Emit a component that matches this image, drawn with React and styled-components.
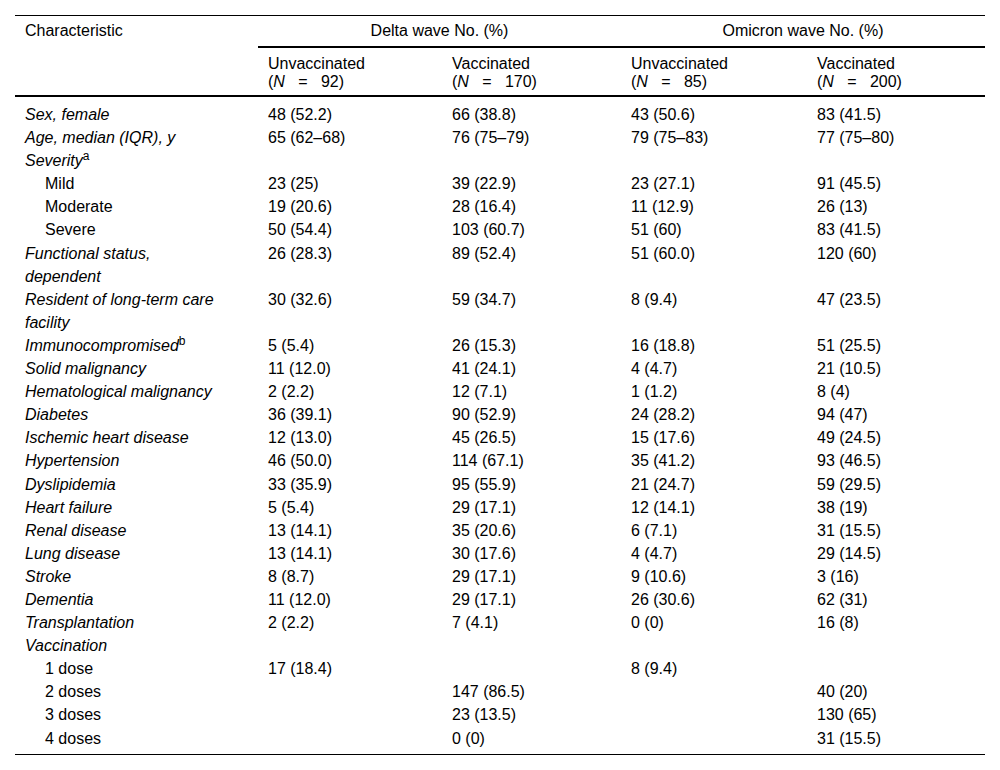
import React from "react";
import styled, { createGlobalStyle, css } from "styled-components";

const GlobalStyle = createGlobalStyle`
  body {
    margin: 0;
    background: #fff;
    color: #000;
    font-family: "Liberation Sans", Arial, sans-serif;
  }
`;

const columns = css`
  display: grid;
  grid-template-columns: 243px 184px 179px 186px 178px;
`;

const TableBox = styled.div`
  margin: 15px 0 0 15px;
  width: 970px;
  border-top: 1px solid #000;
  border-bottom: 1px solid #000;
  font-size: 16px;
  color: #000;
`;

const Head = styled.div`
  ${columns};
  grid-template-rows: auto auto;
  line-height: 18px;
  border-bottom: 2px solid #000;
`;

const Corner = styled.div`
  grid-row: 1 / span 2;
  padding: 6px 10px;
`;

const Group = styled.div`
  grid-column: span 2;
  text-align: center;
  padding: 6px 10px;
  border-bottom: 2px solid #000;
`;

const Sub = styled.div`
  padding: 7px 10px 4px;
`;

const Body = styled.div`
  padding: 6px 0 4px;
`;

const Row = styled.div`
  ${columns};
  line-height: 23.1px;
`;

const Label = styled.div`
  padding: 0 37px 0 ${(p) => (p.$indent ? "30px" : "10px")};
  font-style: ${(p) => (p.$indent ? "normal" : "italic")};
`;

const Value = styled.div`
  padding: 0 10px;
`;

const Sup = styled.sup`
  font-size: 12px;
  font-style: normal;
  line-height: 0;
  vertical-align: 6px;
`;

const Count = ({ n }) => (
  <>
    (<i>N</i>
    {"\u00a0\u00a0\u00a0=\u00a0\u00a0\u00a0"}
    {n})
  </>
);

const groups = [
  { title: "Unvaccinated", n: 92 },
  { title: "Vaccinated", n: 170 },
  { title: "Unvaccinated", n: 85 },
  { title: "Vaccinated", n: 200 },
];

const rows = [
  { label: "Sex, female", v: ["48 (52.2)", "66 (38.8)", "43 (50.6)", "83 (41.5)"] },
  { label: "Age, median (IQR), y", v: ["65 (62–68)", "76 (75–79)", "79 (75–83)", "77 (75–80)"] },
  { label: "Severity", sup: "a", v: ["", "", "", ""] },
  { label: "Mild", indent: true, v: ["23 (25)", "39 (22.9)", "23 (27.1)", "91 (45.5)"] },
  { label: "Moderate", indent: true, v: ["19 (20.6)", "28 (16.4)", "11 (12.9)", "26 (13)"] },
  { label: "Severe", indent: true, v: ["50 (54.4)", "103 (60.7)", "51 (60)", "83 (41.5)"] },
  { label: "Functional status, dependent", v: ["26 (28.3)", "89 (52.4)", "51 (60.0)", "120 (60)"] },
  { label: "Resident of long-term care facility", v: ["30 (32.6)", "59 (34.7)", "8 (9.4)", "47 (23.5)"] },
  { label: "Immunocompromised", sup: "b", v: ["5 (5.4)", "26 (15.3)", "16 (18.8)", "51 (25.5)"] },
  { label: "Solid malignancy", v: ["11 (12.0)", "41 (24.1)", "4 (4.7)", "21 (10.5)"] },
  { label: "Hematological malignancy", v: ["2 (2.2)", "12 (7.1)", "1 (1.2)", "8 (4)"] },
  { label: "Diabetes", v: ["36 (39.1)", "90 (52.9)", "24 (28.2)", "94 (47)"] },
  { label: "Ischemic heart disease", v: ["12 (13.0)", "45 (26.5)", "15 (17.6)", "49 (24.5)"] },
  { label: "Hypertension", v: ["46 (50.0)", "114 (67.1)", "35 (41.2)", "93 (46.5)"] },
  { label: "Dyslipidemia", v: ["33 (35.9)", "95 (55.9)", "21 (24.7)", "59 (29.5)"] },
  { label: "Heart failure", v: ["5 (5.4)", "29 (17.1)", "12 (14.1)", "38 (19)"] },
  { label: "Renal disease", v: ["13 (14.1)", "35 (20.6)", "6 (7.1)", "31 (15.5)"] },
  { label: "Lung disease", v: ["13 (14.1)", "30 (17.6)", "4 (4.7)", "29 (14.5)"] },
  { label: "Stroke", v: ["8 (8.7)", "29 (17.1)", "9 (10.6)", "3 (16)"] },
  { label: "Dementia", v: ["11 (12.0)", "29 (17.1)", "26 (30.6)", "62 (31)"] },
  { label: "Transplantation", v: ["2 (2.2)", "7 (4.1)", "0 (0)", "16 (8)"] },
  { label: "Vaccination", v: ["", "", "", ""] },
  { label: "1 dose", indent: true, v: ["17 (18.4)", "", "8 (9.4)", ""] },
  { label: "2 doses", indent: true, v: ["", "147 (86.5)", "", "40 (20)"] },
  { label: "3 doses", indent: true, v: ["", "23 (13.5)", "", "130 (65)"] },
  { label: "4 doses", indent: true, v: ["", "0 (0)", "", "31 (15.5)"] },
];

export default function App() {
  return (
    <>
      <GlobalStyle />
      <TableBox>
        <Head>
          <Corner>Characteristic</Corner>
          <Group>Delta wave No. (%)</Group>
          <Group>Omicron wave No. (%)</Group>
          {groups.map((g, i) => (
            <Sub key={i}>
              {g.title}
              <br />
              <Count n={g.n} />
            </Sub>
          ))}
        </Head>
        <Body>
          {rows.map((r) => (
            <Row key={r.label}>
              <Label $indent={r.indent}>
                {r.label}
                {r.sup && <Sup>{r.sup}</Sup>}
              </Label>
              {r.v.map((val, i) => (
                <Value key={i}>{val}</Value>
              ))}
            </Row>
          ))}
        </Body>
      </TableBox>
    </>
  );
}
